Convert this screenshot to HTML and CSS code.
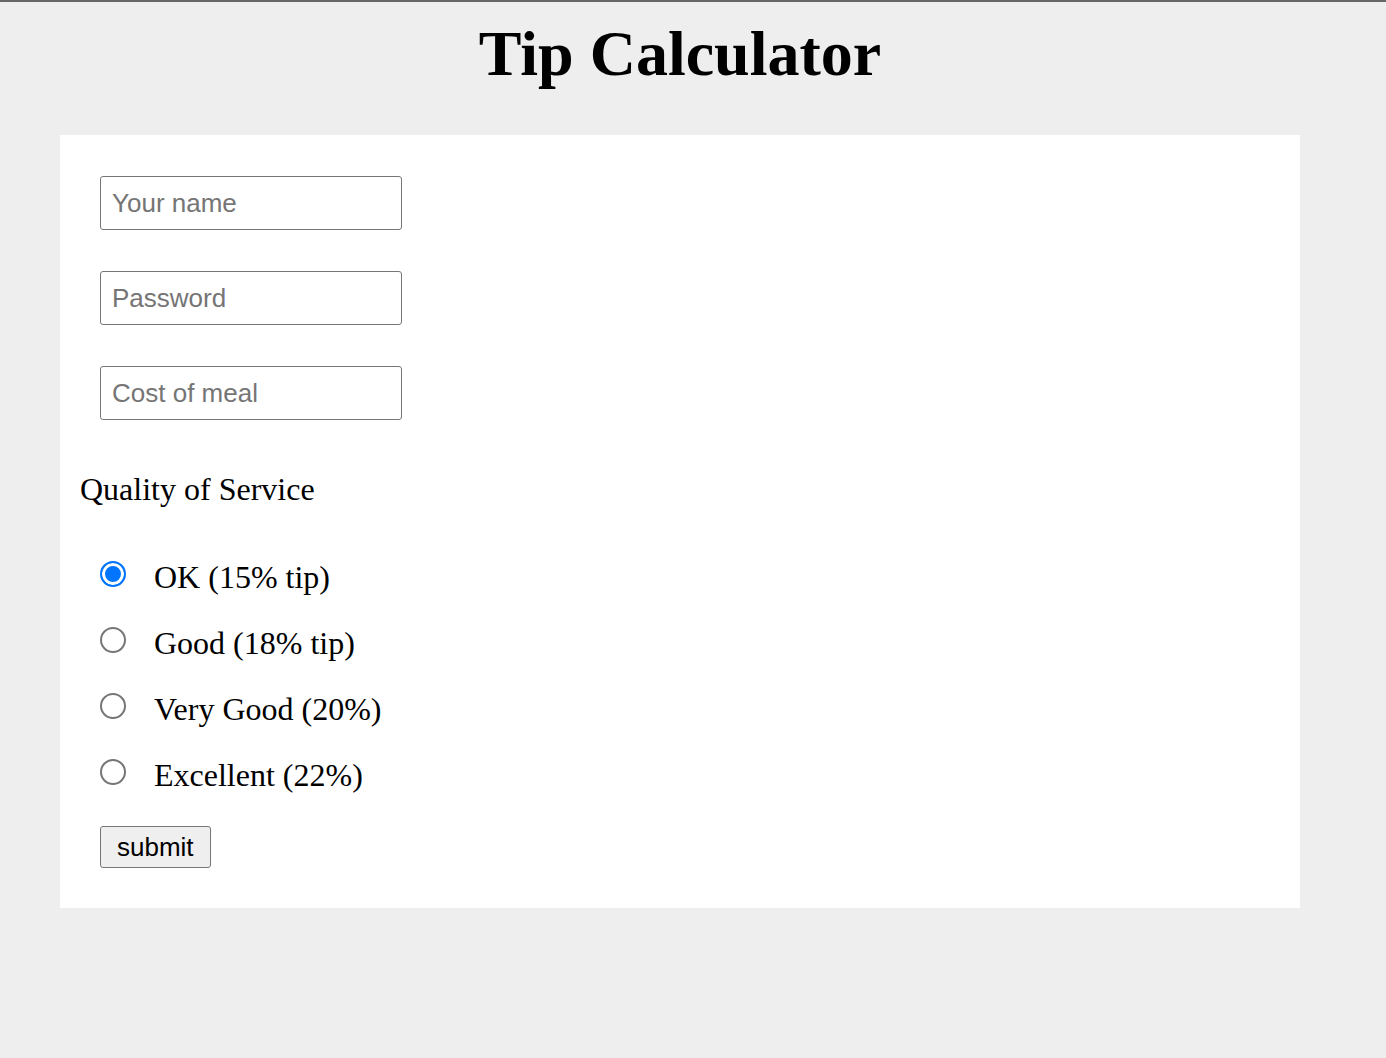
FILE: index.html
```html
<!DOCTYPE html>
<html lang="en">
<head>
<meta charset="utf-8">
<title>Tip Calculator</title>
<link rel="stylesheet" href="styles.css">
</head>
<body>
<div class="page">
  <h1 class="title">Tip Calculator</h1>
  <form class="card">
    <div class="fields">
      <input class="field" type="text" placeholder="Your name">
      <input class="field" type="password" placeholder="Password">
      <input class="field" type="text" placeholder="Cost of meal">
    </div>
    <p class="section">Quality of Service</p>
    <div class="options">
      <label class="option"><span class="radio checked"></span>OK (15% tip)</label>
      <label class="option"><span class="radio"></span>Good (18% tip)</label>
      <label class="option"><span class="radio"></span>Very Good (20%)</label>
      <label class="option"><span class="radio"></span>Excellent (22%)</label>
    </div>
    <button class="submit" type="button">submit</button>
  </form>
</div>
</body>
</html>
```
FILE: styles.css
```css
html, body {
  margin: 0;
  padding: 0;
}
body {
  background: #eeeeee;
  border-top: 2px solid #666666;
  min-height: 1056px;
  font-family: "Liberation Serif", "Times New Roman", serif;
  color: #000;
}
.page {
  width: 1240px;
  margin-left: 60px;
}
.title {
  margin: 15px 0 44px;
  font-size: 64px;
  font-weight: bold;
  text-align: center;
  line-height: normal;
}
.card {
  background: #ffffff;
  padding: 41px 20px 40px;
}
.fields {
  display: flex;
  flex-direction: column;
  gap: 42px;
  padding-left: 20px;
}
.field {
  box-sizing: border-box;
  width: 302px;
  height: 54px;
  margin: 0;
  padding: 0 11px;
  border: 1px solid #767676;
  border-radius: 3px;
  font-family: "Liberation Sans", Arial, sans-serif;
  font-size: 26px;
  color: #000;
  background: #fff;
  outline: none;
}
.fields .field + .field {
  margin-top: -1px;
}
.field::placeholder {
  color: #757575;
}
.section {
  margin: 51px 0 0;
  font-size: 32px;
  line-height: normal;
}
.options {
  margin-top: 36px;
  padding-left: 20px;
}
.option {
  display: block;
  font-size: 32px;
  line-height: 66px;
}
.radio {
  display: inline-block;
  box-sizing: border-box;
  width: 26px;
  height: 26px;
  margin-right: 28px;
  border: 2px solid #767676;
  border-radius: 50%;
  background: #fff;
  vertical-align: 1px;
}
.radio.checked {
  border-color: #0075ff;
  background: #0075ff;
  box-shadow: inset 0 0 0 3px #ffffff;
}
.submit {
  display: block;
  box-sizing: border-box;
  margin: 18px 0 0 20px;
  height: 42px;
  padding: 0 16px;
  border: 1px solid #767676;
  border-radius: 3px;
  background: #efefef;
  font-family: "Liberation Sans", Arial, sans-serif;
  font-size: 26px;
  color: #000;
}
```
